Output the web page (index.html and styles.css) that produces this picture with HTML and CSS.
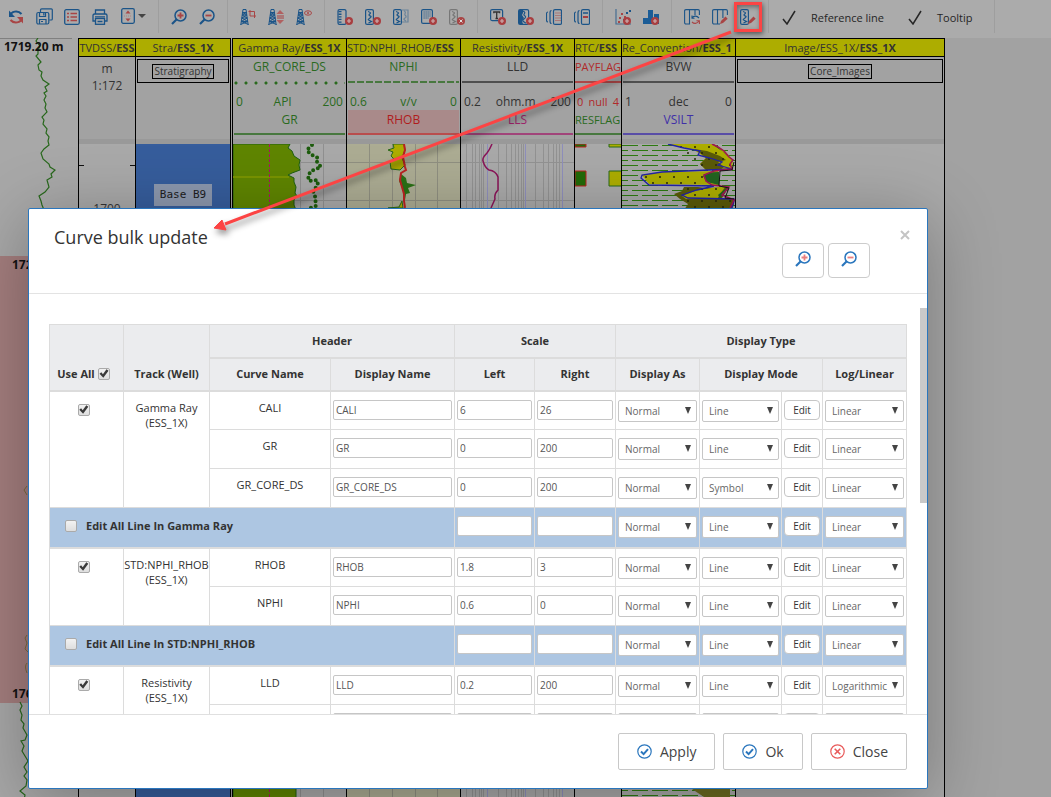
FILE: index.html
```html
<!DOCTYPE html>
<html lang="en">
<head>
<meta charset="utf-8">
<meta name="viewport" content="width=device-width, initial-scale=1">
<title>Curve bulk update</title>
<link rel="stylesheet" href="styles.css">
</head>
<body>
<svg class="defs" aria-hidden="true">
  <defs>
    <symbol id="plus-badge" viewBox="0 0 8 8"><circle cx="4" cy="4" r="4" fill="#a83e40"/><path d="M4 2v4M2 4h4" stroke="#ccb0b0" stroke-width="1.2"/></symbol>
    <symbol id="zoom-in" viewBox="0 0 16 16"><circle cx="9.500" cy="6.500" r="5.500" fill="none" stroke="currentColor" stroke-width="1.500"/><path d="M5.500 10.500L1 15" stroke="currentColor" stroke-width="2.200"/><path d="M9.500 3.500v6M6.500 6.500h6" stroke="var(--accent)" stroke-width="1.800"/></symbol>
    <symbol id="zoom-out" viewBox="0 0 16 16"><circle cx="9.500" cy="6.500" r="5.500" fill="none" stroke="currentColor" stroke-width="1.500"/><path d="M5.500 10.500L1 15" stroke="currentColor" stroke-width="2.200"/><path d="M6.500 6.500h6" stroke="var(--accent)" stroke-width="1.800"/></symbol>
    <symbol id="derrick" viewBox="0 0 9 16"><path d="M3 .5h3M3 .5L.8 16M6 .5L8.200 16M2.500 3.500h4M2.200 6h4.600M1.800 9h5.400M1.300 12.500h6.400M2.500 3.500l4.300 2.500L1.800 9l6 3.500L.5 15.500M6.500 3.500L2.200 6l5 3-6 3.500 7.300 3" stroke="currentColor" stroke-width="1" fill="none"/></symbol>
    <symbol id="curve-box" viewBox="0 0 9 16"><rect x=".6" y=".6" width="7.800" height="14.800" rx="1.500" fill="none" stroke="currentColor" stroke-width="1.200"/><path d="M3 2.500c5 1.500 1 2.500 1 3.500s4 1 1 3-2 1.500 1.500 3.500l-3 1.500" fill="none" stroke="currentColor" stroke-width="1.300"/></symbol>
    <symbol id="pencil" viewBox="0 0 8 8"><path d="M0 8l1-3 4.500-4.500 2.200 2.200L3 7z" fill="var(--accent)"/></symbol>
    <symbol id="tick" viewBox="0 0 15 15"><path d="M1 9l4 5L13 1" fill="none" stroke="currentColor" stroke-width="1.500"/></symbol>
    <symbol id="circle-check" viewBox="0 0 15 15"><circle cx="7.500" cy="7.500" r="6.700" fill="none" stroke="currentColor" stroke-width="1.200"/><path d="M4 7.500l2.600 2.600L11 5.200" fill="none" stroke="currentColor" stroke-width="2"/></symbol>
    <symbol id="circle-cross" viewBox="0 0 15 15"><circle cx="7.500" cy="7.500" r="6.700" fill="none" stroke="currentColor" stroke-width="1.200"/><path d="M4.700 4.700l5.600 5.600M10.300 4.700l-5.600 5.600" stroke="currentColor" stroke-width="1.600"/></symbol>
  </defs>
</svg>

<div class="app">
  <header class="toolbar">
    <div class="group first">
      <button class="tool" aria-label="Refresh"><svg width="16" height="16" viewBox="0 0 16 16" fill="none"><path d="M2 7C3 2 10 1 13.500 5" stroke="#1b5488" stroke-width="2"/><path d="M1 1.500V8h6z" fill="#1b5488"/><path d="M14 9c-1 5-8 6-11.500 2" stroke="#a84545" stroke-width="2"/><path d="M15 14.500V8H9z" fill="#a84545"/></svg></button>
      <button class="tool" aria-label="Save all"><svg width="17" height="17" viewBox="0 0 17 17" fill="none" stroke="#1b5488" stroke-width="1.200"><path d="M4.500 4V2q0-1.200 1.200-1.200h9.600q1 0 1 1V11q0 1-1 1h-2"/><rect x=".8" y="4.500" width="12" height="11.500" rx="1.500"/><path d="M3.500 5v3.500h6V5M3.500 16v-4.500h6.500V16M7.800 5v2.500M5 13.500h2"/></svg></button>
      <button class="tool" aria-label="List"><svg width="16" height="16" viewBox="0 0 16 16" fill="none"><rect x=".7" y=".7" width="14.600" height="14.600" rx="1.500" stroke="#1b5488" stroke-width="1.300"/><path d="M3 4.500h2M3 8h2M3 11.500h2M6.500 4.500H13M6.500 8H13M6.500 11.500H13" stroke="#a84545" stroke-width="1.400"/></svg></button>
      <button class="tool" aria-label="Print"><svg width="16" height="16" viewBox="0 0 16 16" fill="none" stroke="#1b5488" stroke-width="1.300"><path d="M3.500 5V1h9v4M3 12H1V6.500Q1 5 2.500 5h11Q15 5 15 6.500V12h-2"/><rect x="3.500" y="9.500" width="9" height="5.800"/><path d="M3 7.800h10M5.500 12.500h5"/></svg></button>
      <button class="tool drop" aria-label="Fit height"><svg width="14" height="16" viewBox="0 0 14 16"><rect x=".7" y=".7" width="12.600" height="14.600" rx="1.500" fill="none" stroke="#1b5488" stroke-width="1.300"/><path d="M7 2.500l2.500 3h-5zM7 13.500l2.500-3h-5z" fill="#a84545"/><path d="M3 8h8" stroke="#b08080" stroke-dasharray="1 1"/></svg><svg width="8" height="4" viewBox="0 0 8 4"><path d="M0 0h8L4 4z" fill="#444"/></svg></button>
    </div>
    <div class="group">
      <button class="tool" aria-label="Zoom in"><svg width="16" height="16"><use href="#zoom-in"/></svg></button>
      <button class="tool" aria-label="Zoom out"><svg width="16" height="16"><use href="#zoom-out"/></svg></button>
    </div>
    <div class="group">
      <button class="tool" aria-label="Crop well"><svg width="16" height="16" viewBox="0 0 16 16"><use href="#derrick" width="9" height="16"/><path d="M10 1v6h6M8.500 2.500h6V9" fill="none" stroke="#a84545"/></svg></button>
      <button class="tool" aria-label="Stretch well"><svg width="16" height="16" viewBox="0 0 16 16"><use href="#derrick" width="9" height="16"/><path d="M12 1l4 4H8.500zM12 15l4-4H8.500z" fill="#b06060"/><path d="M9 7h7M9 9h7" stroke="#a84545"/></svg></button>
      <button class="tool" aria-label="Show well"><svg width="16" height="16" viewBox="0 0 16 16"><use href="#derrick" width="9" height="16"/><ellipse cx="12" cy="4" rx="3.500" ry="2.200" fill="none" stroke="#a84545"/><circle cx="12" cy="4" r="1" fill="#a84545"/></svg></button>
    </div>
    <div class="group">
      <button class="tool" aria-label="Add depth track"><svg width="16" height="16" viewBox="0 0 16 16"><rect x="1" y=".6" width="8" height="14.800" rx="1.500" fill="none" stroke="currentColor" stroke-width="1.200"/><path d="M3 2v13" stroke="currentColor" stroke-width="3" stroke-dasharray="1.300 1.300"/><use href="#plus-badge" x="8" y="8" width="8" height="8"/></svg></button>
      <button class="tool" aria-label="Add curve track"><svg width="16" height="16" viewBox="0 0 16 16"><use href="#curve-box" width="9" height="16"/><use href="#plus-badge" x="8" y="8" width="8" height="8"/></svg></button>
      <button class="tool" aria-label="Duplicate track"><svg width="16" height="16" viewBox="0 0 16 16"><use href="#curve-box" width="9" height="16"/><g opacity=".45"><path d="M9 1h6v12H9M11 2c3 1 0 3 1 4s2 2 0 3-1 2 1 3" fill="none" stroke="currentColor" stroke-width="1.200"/></g></svg></button>
      <button class="tool" aria-label="Add table track"><svg width="16" height="16" viewBox="0 0 16 16"><rect x=".6" y=".6" width="10.800" height="13.800" rx="1.500" fill="none" stroke="currentColor" stroke-width="1.200"/><path d="M2.500 3h7M2.500 5h7M2.500 7h7M2.500 9h5" stroke="currentColor" stroke-width="1.200" stroke-dasharray="1.200 .8"/><use href="#plus-badge" x="8" y="8" width="8" height="8"/></svg></button>
      <button class="tool off" aria-label="Remove track"><svg width="16" height="16" viewBox="0 0 16 16"><use href="#curve-box" width="9" height="16"/><circle cx="12" cy="12" r="4" fill="#a84545"/><path d="M10.500 10.500l3 3M13.500 10.500l-3 3" stroke="#ddd"/></svg></button>
    </div>
    <div class="group">
      <button class="tool" aria-label="Add text"><svg width="16" height="16" viewBox="0 0 16 16"><rect x=".6" y=".6" width="12" height="11" rx="1.500" fill="none" stroke="currentColor" stroke-width="1.200"/><path d="M3.800 4.200V3h5.800v1.200M6.700 3v6.500M5.500 9.500H8" fill="none" stroke="#333" stroke-width="1.300"/><use href="#plus-badge" x="8" y="8" width="8" height="8"/></svg></button>
      <button class="tool" aria-label="Add filled curve"><svg width="16" height="16" viewBox="0 0 16 16"><path d="M1 1h4v3l-1 2 2 3-2 3 1 3H1z" fill="currentColor"/><rect x=".6" y=".6" width="10" height="14.800" rx="1.500" fill="none" stroke="currentColor" stroke-width="1.200"/><path d="M5 2c4 2 0 3 1 4s3 2 0 4 0 3 2 4" fill="none" stroke="currentColor" stroke-width="1.200"/><use href="#plus-badge" x="8" y="8" width="8" height="8"/></svg></button>
      <button class="tool" aria-label="Point track"><svg width="16" height="16" viewBox="0 0 16 16" fill="none"><path d="M2 3Q.5 3 .5 5v6q0 2 1.500 2M5.500 1.500Q4 1.500 4 4v8q0 2.500 1.500 2.500" stroke="currentColor" stroke-width="1.200"/><rect x="7.500" y=".6" width="8" height="14.800" rx="1.500" stroke="currentColor" stroke-width="1.200"/><path d="M9.500 4h5M9.500 6.500h5M9.500 9h5M9.500 11.500h5" stroke="#a84545" stroke-dasharray="1 1"/></svg></button>
      <button class="tool" aria-label="Line track"><svg width="16" height="16" viewBox="0 0 16 16" fill="none"><path d="M2 3Q.5 3 .5 5v6q0 2 1.500 2M5.500 1.500Q4 1.500 4 4v8q0 2.500 1.500 2.500" stroke="currentColor" stroke-width="1.200"/><rect x="7.500" y=".6" width="8" height="14.800" rx="1.500" stroke="currentColor" stroke-width="1.200"/><path d="M9 4h5" stroke="currentColor" stroke-width="1.500"/><path d="M9 8h5" stroke="#a83e40" stroke-width="2"/></svg></button>
    </div>
    <div class="group">
      <button class="tool" aria-label="Add cross plot"><svg width="16" height="16" viewBox="0 0 16 16"><path d="M1 0v15h15" fill="none" stroke="currentColor" stroke-width="1.200" opacity=".7"/><path d="M4 8h2v2H4zM6 4h2v2H6zM9 7h2v2H9zM3 12h2v2H3z" fill="#a84545"/><path d="M11 3h2v2h-2zM14 1h2v2h-2zM8 10h2v2H8z" fill="#1b5488"/><use href="#plus-badge" x="8" y="8" width="8" height="8"/></svg></button>
      <button class="tool" aria-label="Add histogram"><svg width="16" height="16" viewBox="0 0 16 16"><path d="M0 9h5v6H0zM5 1h5v14H5zM11 5h5v10h-5z" fill="#1b5c96"/><use href="#plus-badge" x="8" y="8" width="8" height="8"/></svg></button>
    </div>
    <div class="group">
      <button class="tool" aria-label="Reload tracks"><svg width="16" height="16" viewBox="0 0 16 16" fill="none" stroke="currentColor" stroke-width="1.100"><path d="M5.500 15H2q-1.400 0-1.400-1.400V2Q.6.600 2 .6h3.500zM5.500.6H11V6M10.900.6h3.200Q15.400.6 15.400 2v4M5.500.6V15"/><path d="M8 9c2-3 5-2 7 0M8 6.500V9.200h2.500"/><path d="M15 12c-2 3-5 3-7 1M15.400 15v-3.200h-3" stroke="#a84545"/></svg></button>
      <button class="tool" aria-label="Edit tracks"><svg width="16" height="16" viewBox="0 0 16 16" fill="none"><path d="M5.500 15H2q-1.400 0-1.400-1.400V2Q.6.600 2 .6h3.500V15zM5.500.6h5.400V9M10.900.6h3.200Q15.400.6 15.400 2v4M5.500 15H8" stroke="currentColor" stroke-width="1.100"/><use href="#pencil" x="8" y="7" width="8" height="8"/></svg></button>
      <button class="tool marked" aria-label="Curve bulk update"><svg width="16" height="16" viewBox="0 0 16 16"><use href="#curve-box" width="9" height="16"/><use href="#pencil" x="8" y="7" width="8" height="8"/></svg></button>
    </div>
    <div class="group toggles">
      <button class="toggle" aria-pressed="true"><svg width="15" height="15"><use href="#tick"/></svg>Reference line</button>
      <button class="toggle" aria-pressed="true"><svg width="15" height="15"><use href="#tick"/></svg>Tooltip</button>
    </div>
  </header>

  <main class="workspace">
    <aside class="overview">
      <svg class="fill" aria-hidden="true">
        <rect x="0" y="218" width="100" height="447" fill="#a47e7e"/>
        <path d="M0 .5h72" stroke="#808080"/>
        <path d="M38 0L36 3 40 8 38 12 38 16 36 18 41 24 38 27 39 32 42 34 41 38 43 42 49 46 45 49 47 53 44 55 46 58 44 62 46 66 45 70 47 74 42 79 44 82 43 86 47 91 46 95 49 99 48 103 49 107 44 111 41 115 43 121 49 126 50 129 55 132 51 136 52 139 47 142 49 149 45 154 39 158 41 163 42 167 44 172" fill="none" stroke="#28681c" stroke-width="1.200"/>
        <path d="M27 448l-3 4 3 5M27 597l-2 3 2 5-2 6 3 3M27 625q-3 3 0 10" fill="none" stroke="#7a6a40"/>
        <path d="M20 664L22 668 20 672 22 677 21 682 24 686 23 690 27 697 25 702 21 703 24 708 22 713 25 718 28 723 24 729 27 734 24 738 27 742 26 748 20 753 25 757 24 762" fill="none" stroke="#28681c" stroke-width="1.200"/>
      </svg>
      <span class="depth d1">1719.20 m</span><span class="depth d2">1720</span><span class="depth d3">1760</span>
    </aside>
    <section class="tracks">
      <div class="track w-depth">
        <h2>TVDSS/<b>ESS</b></h2>
        <div class="head"><p>m</p><p>1:172</p></div>
        <div class="plot"><svg class="fill" aria-hidden="true"><path d="M0 21.500h5M51 21.500h6" stroke="#111"/></svg><span class="mark">1700</span></div>
      </div>
      <div class="track w-stra">
        <h2>Stra/<b>ESS_1X</b></h2>
        <div class="head"><div class="box"><span>Stratigraphy</span></div></div>
        <div class="plot blue"><span class="zone">Base B9</span></div>
      </div>
      <div class="track w-curve">
        <h2>Gamma Ray/<b>ESS_1X</b></h2>
        <div class="head green"><p>GR_CORE_DS</p><i class="rule dotted"></i><div class="scale"><span>0</span><span>API</span><span>200</span></div><p class="second">GR</p><i class="rule"></i></div>
        <div class="plot"><svg class="fill" aria-hidden="true">
          <path d="M67.500 0v660M90.500 0v660M0 18.500h114M0 56.500h114" stroke="#909090"/>
          <path d="M0 0H57L55 4 59 7 61 12 67 16 66 21 67 26 59 29 55 31 61 34 61 38 63 43 62 49 64 52 61 56 61 61 63 66V660H0z" fill="#5f8500" stroke="#1f6010"/>
          <path d="M0 33h56" stroke="#799400" stroke-width="2"/>
          <path d="M36.500 0v660" stroke="#aa1464" stroke-dasharray="3 2"/>
          <path d="M79 1l-5 5 3 4 8 4-1 4 4 5-10 4-3 5 1 5 8-1 1 5-5 6 2 5 1 10-6 2" fill="none" stroke="#1d5c0d" stroke-width="4" stroke-linecap="round" stroke-dasharray="0 5"/>
        </svg></div>
      </div>
      <div class="track w-curve">
        <h2 class="left">STD:NPHI_RHOB/<b>ESS</b></h2>
        <div class="head green"><p>NPHI</p><i class="rule dashed"></i><div class="scale"><span>0.6</span><span>v/v</span><span>0</span></div><p class="second hot">RHOB</p><i class="rule red"></i></div>
        <div class="plot sand"><svg class="fill" aria-hidden="true">
          <path d="M22.500 0v660M45.500 0v660M68.500 0v660M90.500 0v660M0 18.500h114M0 56.500h114" stroke="#8f8f80"/>
          <path d="M46 0L47 4 41 6 46 8 44 12 47 15 43 18 44 25 53 26 58 21 55 14 58 6 57 0zM55 57L52 63 41 64h15z" fill="#adad00" stroke="#28681c"/>
          <path d="M54 30L59 34 60 39 69 41 61 44 63 49 59 50 58 56 56 46 52 37z" fill="#2a7016"/>
          <path d="M57 0L58 6 56 13 57 18 58 23 59 26 54 29 53 36 55 43 57 50 57 57 58 64" fill="none" stroke="#b22" stroke-width="2"/>
        </svg></div>
      </div>
      <div class="track w-curve">
        <h2>Resistivity/<b>ESS_1X</b></h2>
        <div class="head"><p>LLD</p><i class="rule"></i><div class="scale"><span>0.2</span><span>ohm.m</span><span>200</span></div><p class="second magenta">LLS</p><i class="rule magenta"></i></div>
        <div class="plot"><svg class="fill" aria-hidden="true">
          <path d="M5.500 0v660M11.500 0v660M14.500 0v660M18.500 0v660M20.500 0v660M22.500 0v660M37.500 0v660M45.500 0v660M50.500 0v660M54.500 0v660M57.500 0v660M60.500 0v660M62.500 0v660M74.500 0v660M82.500 0v660M87.500 0v660M92.500 0v660M95.500 0v660M98.500 0v660M0 18.500h114M0 56.500h114" stroke="#929292"/>
          <path d="M26.500 0v660M64.500 0v660M101.500 0v660" stroke="#8e8ebb"/>
          <path d="M31 0Q29 5 26 9 21 14 22 17 24 24 28 26 35 27 37 33V46Q33 50 34 55L30 64" fill="none" stroke="#8a1458" stroke-width="1.500"/>
        </svg></div>
      </div>
      <div class="track w-flag">
        <h2 class="left">RTC/<b>ESS</b></h2>
        <div class="head red"><p class="left">PAYFLAG</p><i class="rule"></i><div class="scale"><span>0</span><span>null</span><span>4</span></div><p class="second greenish left">RESFLAG</p><i class="rule greenish"></i></div>
        <div class="plot"><svg class="fill" aria-hidden="true"><path d="M0 0h11v3H0zM0 27h11v15H0z" fill="#226a08" stroke="#b22"/><path d="M34 0h13v3H34zM34 27h13v15H34z" fill="#adad00" stroke="#28681c"/></svg></div>
      </div>
      <div class="track w-curve">
        <h2 class="left">Re_Convention/<b>ESS_1</b></h2>
        <div class="head"><p>BVW</p><i class="rule"></i><div class="scale"><span>1</span><span>dec</span><span>0</span></div><p class="second violet">VSILT</p><i class="rule violet"></i></div>
        <div class="plot"><svg class="fill" aria-hidden="true">
          <defs>
            <pattern id="dots" width="14" height="12" patternUnits="userSpaceOnUse"><circle cx="3" cy="3" r="1" fill="#26260a"/><circle cx="10" cy="9" r="1" fill="#26260a"/></pattern>
            <pattern id="dashes" width="20" height="10" patternUnits="userSpaceOnUse"><path d="M0 1.500h16M0 6.500h6M10 6.500h10" stroke="#2d7a10"/></pattern>
          </defs>
          <rect width="113" height="660" fill="url(#dashes)"/>
          <path d="M46 0H92L103 7 111 16 110 25 84 26 78 20 84 14 72 6z" fill="#adad00"/>
          <path d="M72 5L85 7 98 12 104 16 96 18 102 23 98 26H84L78 20 84 14 78 9z" fill="#5a5a08"/>
          <path d="M90 0L96 3 101 8 107 13 110 16 104 10z" fill="#236420"/>
          <path d="M20 31L40 28 96 27 97 41 27 40z" fill="#adad00"/>
          <path d="M97 28Q84 28 81 32L85 38 97 41z" fill="#236420"/>
          <path d="M62 43H76L84 44 107 43 100 54 113 55 110 66H62L66 60 58 55 52 50 60 47z" fill="#5a5a08"/>
          <path d="M60 52L75 46 104 42 98 50 96 54 64 55z" fill="#adad00"/>
          <path d="M107 42L102 50 98 54 96 51 102 46z" fill="#236420"/>
          <path d="M46 0H92L111 16 110 25H80zM20 31L40 28H82V41H27zM60 44H104L97 54 110 56 108 66H62z" fill="url(#dots)"/>
          <path d="M46 0L62 4 78 7 76 11 88 14 100 18 96 21 110 25 40 28 20 31 19 34 27 41 92 42 75 46 60 51 66 54 112 55Q112 62 108 66" fill="none" stroke="#2222a8" stroke-width="1.300"/>
          <path d="M90 0L96 3 102 7 107 13 111 16 108 20 110 25 92 27 82 31 84 37 90 41 107 43 100 51 112 56 108 64" fill="none" stroke="#a01458" stroke-width="1.500"/>
          <path d="M112 18L110 26 98 27 97 42 107 44 103 54 112 55" fill="none" stroke="#151515"/>
          <path d="M70 645q20-6 38 0v10H85z" fill="#6c6c20"/>
        </svg></div>
      </div>
      <div class="track w-image">
        <h2>Image/ESS_1X/<b>ESS_1X</b></h2>
        <div class="head"><div class="box"><span>Core_Images</span></div></div>
        <div class="plot"></div>
      </div>
    </section>
  </main>

  <div class="dialog" role="dialog" aria-labelledby="dialog-title">
    <header class="dialog-head">
      <h1 id="dialog-title">Curve bulk update</h1>
      <div class="zoomers">
        <button class="zoomer" aria-label="Zoom in table"><svg width="16" height="16"><use href="#zoom-in"/></svg></button>
        <button class="zoomer" aria-label="Zoom out table"><svg width="16" height="16"><use href="#zoom-out"/></svg></button>
      </div>
      <button class="dismiss" aria-label="Dismiss"><svg width="10" height="10" viewBox="0 0 10 10"><path d="M1 1l8 8M9 1L1 9" stroke="#c4c4c4" stroke-width="2"/></svg></button>
    </header>
    <div class="dialog-body">
      <table class="curves">
        <colgroup><col class="c-use"><col class="c-track"><col class="c-name"><col class="c-display"><col class="c-left"><col class="c-right"><col class="c-as"><col class="c-mode"><col class="c-edit"><col class="c-log"></colgroup>
        <thead>
          <tr><th rowspan="2" class="low"><label class="use">Use All <input type="checkbox" checked></label></th><th rowspan="2" class="low">Track (Well)</th><th colspan="2">Header</th><th colspan="2">Scale</th><th colspan="4">Display Type</th></tr>
          <tr><th>Curve Name</th><th>Display Name</th><th>Left</th><th>Right</th><th>Display As</th><th colspan="2">Display Mode</th><th>Log/Linear</th></tr>
        </thead>
        <tbody>
          <tr><td rowspan="3" class="pick"><input type="checkbox" checked aria-label="Use Gamma Ray"></td><td rowspan="3" class="well">Gamma Ray<br>(ESS_1X)</td><td class="name">CALI</td><td><input type="text" value="CALI" aria-label="Display name"></td><td><input type="text" value="6" aria-label="Left"></td><td><input type="text" value="26" aria-label="Right"></td><td><span class="sel"><select aria-label="Display as"><option>Normal</option></select></span></td><td><span class="sel"><select aria-label="Display mode"><option>Line</option></select></span></td><td><button class="edit">Edit</button></td><td><span class="sel"><select aria-label="Log or linear"><option>Linear</option></select></span></td></tr>
          <tr><td class="name">GR</td><td><input type="text" value="GR" aria-label="Display name"></td><td><input type="text" value="0" aria-label="Left"></td><td><input type="text" value="200" aria-label="Right"></td><td><span class="sel"><select aria-label="Display as"><option>Normal</option></select></span></td><td><span class="sel"><select aria-label="Display mode"><option>Line</option></select></span></td><td><button class="edit">Edit</button></td><td><span class="sel"><select aria-label="Log or linear"><option>Linear</option></select></span></td></tr>
          <tr><td class="name">GR_CORE_DS</td><td><input type="text" value="GR_CORE_DS" aria-label="Display name"></td><td><input type="text" value="0" aria-label="Left"></td><td><input type="text" value="200" aria-label="Right"></td><td><span class="sel"><select aria-label="Display as"><option>Normal</option></select></span></td><td><span class="sel"><select aria-label="Display mode"><option>Symbol</option></select></span></td><td><button class="edit">Edit</button></td><td><span class="sel"><select aria-label="Log or linear"><option>Linear</option></select></span></td></tr>
          <tr class="all"><th colspan="4" scope="row"><label><input type="checkbox">Edit All Line In Gamma Ray</label></th><td><input type="text" aria-label="Left"></td><td><input type="text" aria-label="Right"></td><td><span class="sel"><select aria-label="Display as"><option>Normal</option></select></span></td><td><span class="sel"><select aria-label="Display mode"><option>Line</option></select></span></td><td><button class="edit">Edit</button></td><td><span class="sel"><select aria-label="Log or linear"><option>Linear</option></select></span></td></tr>
        </tbody>
        <tbody>
          <tr><td rowspan="2" class="pick"><input type="checkbox" checked aria-label="Use STD:NPHI_RHOB"></td><td rowspan="2" class="well">STD:NPHI_RHOB<br>(ESS_1X)</td><td class="name">RHOB</td><td><input type="text" value="RHOB" aria-label="Display name"></td><td><input type="text" value="1.8" aria-label="Left"></td><td><input type="text" value="3" aria-label="Right"></td><td><span class="sel"><select aria-label="Display as"><option>Normal</option></select></span></td><td><span class="sel"><select aria-label="Display mode"><option>Line</option></select></span></td><td><button class="edit">Edit</button></td><td><span class="sel"><select aria-label="Log or linear"><option>Linear</option></select></span></td></tr>
          <tr><td class="name">NPHI</td><td><input type="text" value="NPHI" aria-label="Display name"></td><td><input type="text" value="0.6" aria-label="Left"></td><td><input type="text" value="0" aria-label="Right"></td><td><span class="sel"><select aria-label="Display as"><option>Normal</option></select></span></td><td><span class="sel"><select aria-label="Display mode"><option>Line</option></select></span></td><td><button class="edit">Edit</button></td><td><span class="sel"><select aria-label="Log or linear"><option>Linear</option></select></span></td></tr>
          <tr class="all"><th colspan="4" scope="row"><label><input type="checkbox">Edit All Line In STD:NPHI_RHOB</label></th><td><input type="text" aria-label="Left"></td><td><input type="text" aria-label="Right"></td><td><span class="sel"><select aria-label="Display as"><option>Normal</option></select></span></td><td><span class="sel"><select aria-label="Display mode"><option>Line</option></select></span></td><td><button class="edit">Edit</button></td><td><span class="sel"><select aria-label="Log or linear"><option>Linear</option></select></span></td></tr>
        </tbody>
        <tbody>
          <tr><td rowspan="2" class="pick"><input type="checkbox" checked aria-label="Use Resistivity"></td><td rowspan="2" class="well">Resistivity<br>(ESS_1X)</td><td class="name">LLD</td><td><input type="text" value="LLD" aria-label="Display name"></td><td><input type="text" value="0.2" aria-label="Left"></td><td><input type="text" value="200" aria-label="Right"></td><td><span class="sel"><select aria-label="Display as"><option>Normal</option></select></span></td><td><span class="sel"><select aria-label="Display mode"><option>Line</option></select></span></td><td><button class="edit">Edit</button></td><td><span class="sel"><select aria-label="Log or linear"><option>Logarithmic</option></select></span></td></tr>
          <tr><td class="name"></td><td><input type="text" aria-label="Display name"></td><td><input type="text" aria-label="Left"></td><td><input type="text" aria-label="Right"></td><td><span class="sel"><select aria-label="Display as"><option></option></select></span></td><td><span class="sel"><select aria-label="Display mode"><option></option></select></span></td><td><button class="edit" aria-label="Edit line"></button></td><td><span class="sel"><select aria-label="Log or linear"><option></option></select></span></td></tr>
        </tbody>
      </table>
      <span class="thumb"></span>
    </div>
    <footer class="dialog-foot">
      <button class="action"><svg width="15" height="15"><use href="#circle-check"/></svg>Apply</button>
      <button class="action"><svg width="15" height="15"><use href="#circle-check"/></svg>Ok</button>
      <button class="action close"><svg width="15" height="15"><use href="#circle-cross"/></svg>Close</button>
    </footer>
  </div>

  <svg class="callout" width="540" height="220" aria-hidden="true"><path d="M521 12L15 204" stroke="#fc4444" stroke-width="3"/><path d="M4 208l8-8 4 10z" fill="#fc4444" stroke="#fc4444"/></svg>
</div>
</body>
</html>
```

FILE: styles.css
```css
* { box-sizing: border-box; }

body {
  margin: 0;
  font-family: "Open Sans", "Noto Sans", sans-serif;
  font-size: 11px;
  color: #333;
  --accent: #a84545;
}

button, input, select { font: inherit; color: inherit; margin: 0; }
button { cursor: pointer; }
h1, h2, p { margin: 0; font-weight: 400; }
.defs { position: absolute; width: 0; height: 0; }

.app {
  position: relative;
  display: flex;
  flex-direction: column;
  height: 100vh;
  min-height: 500px;
  overflow: hidden;
  background: #a2a2a2;
}

/* Toolbar */
.toolbar {
  display: flex;
  flex: none;
  height: 38px;
  background: #ababab;
  color: #1b5488;
}
.group {
  display: flex;
  height: 33px;
  padding: 0 6px;
  border-right: 1px solid #9e9e9e;
}
.group.first { padding-left: 2px; }
.tool {
  display: flex;
  align-items: center;
  justify-content: center;
  width: 28px;
  height: 33px;
  padding: 0;
  border: 0;
  background: none;
}
.tool.drop { width: 38px; gap: 3px; padding-bottom: 2px; }
.tool.off { color: #777; }
.tool.marked {
  height: 30px;
  margin-top: 2px;
  border: 3px solid #fc4444;
  box-shadow: 1px 2px 5px rgba(0, 0, 0, .5), inset 1px 2px 5px rgba(0, 0, 0, .4);
}
.group.toggles { gap: 24px; padding: 0 21px 0 13px; }
.toggle {
  display: flex;
  align-items: center;
  gap: 14px;
  padding: 2px 0 0;
  border: 0;
  background: none;
  color: #262626;
  font-size: 11px;
}

/* Well tracks behind the dialog */
.workspace { display: flex; flex: 1; min-height: 0; }
.overview {
  position: relative;
  flex: none;
  width: 78px;
  background: #a8a8a8;
  overflow: hidden;
}
.fill { display: block; position: absolute; inset: 0; width: 100%; height: 100%; }
.depth {
  position: absolute;
  left: 12px;
  font-size: 12px;
  line-height: 18px;
  font-weight: 700;
  color: #111;
}
.d1 { top: 0; left: 4px; }
.d2 { top: 218px; }
.d3 { top: 647px; }
.tracks { display: flex; border-right: 1px solid #000; }
.track {
  display: flex;
  flex-direction: column;
  min-width: 0;
  border-left: 1px solid #000;
  overflow: hidden;
}
.w-depth { width: 57px; }
.w-stra { width: 96px; border-right: 1px solid #000; margin-right: 1px; }
.w-curve { width: 114px; }
.w-flag { width: 47px; }
.w-image { width: 209px; }
.track h2 {
  flex: none;
  height: 19px;
  border-top: 1px solid #000;
  border-bottom: 1px solid #000;
  background: #adad00;
  font-size: 11px;
  line-height: 17px;
  text-align: center;
  white-space: nowrap;
  overflow: hidden;
  color: #333;
}
.track h2.left, .head p.left { text-align: left; }
.head {
  flex: none;
  height: 82px;
  padding: 2px 1px 0;
  background: #a2a2a2;
  font-size: 12px;
  line-height: 16px;
  text-align: center;
}
.w-flag .head { font-size: 11px; padding-left: 0; padding-right: 0; }
.head.green { color: #2a6a1e; }
.head.red { color: #b02a2a; }
.rule { display: block; height: 2px; background: currentColor; opacity: .75; }
.rule.dotted {
  height: 4px;
  margin-bottom: -2px;
  background: radial-gradient(circle at 2px 2px, currentColor 1px, transparent 2px) 0 0 / 10px 4px;
  opacity: 1;
}
.rule.dashed { background: repeating-linear-gradient(90deg, currentColor 0 7px, transparent 7px 9px); }
.rule.red { color: #c03030; }
.magenta { color: #a0246c; }
.violet { color: #4030a8; }
.greenish { color: #2a6a1e; }
.head p + .rule { margin-top: 6px; }
.scale {
  display: flex;
  justify-content: space-between;
  margin-top: 11px;
  padding: 0 2px;
}
.head p.second { padding: 2px 0 5px; }
.head p.second + .rule { margin-top: 0; }
.head p.hot { background: #a98a8a; color: #b01c1c; }
.w-depth .head p { padding-top: 2px; }
.w-depth .head { line-height: 15px; }
.box {
  display: flex;
  align-items: center;
  justify-content: center;
  height: 24px;
  border: 1px solid #000;
}
.box span {
  padding: 0 1px;
  border: 1px solid #000;
  font-size: 10px;
  line-height: 13px;
}
.plot {
  position: relative;
  flex: 1;
  border-top: 5px solid #999;
  background: #a9a9a9;
  overflow: hidden;
}
.plot.blue { background: #365d9c; text-align: center; }
.plot.sand { background: #acac93; }
.mark { display: block; margin-top: 56px; font-size: 12px; text-align: center; }
.zone {
  display: inline-block;
  margin-top: 40px;
  padding: 0 6px;
  background: #8c98ae;
  font: 11px/22px "DejaVu Sans Mono", monospace;
  color: #1c1c1c;
}

/* Dialog */
.dialog {
  position: absolute;
  inset: 208px 123px 8px 28px;
  display: flex;
  flex-direction: column;
  background: #fff;
  border: 1px solid #2a76bd;
  border-radius: 2px;
  box-shadow: 0 12px 70px rgba(0, 0, 0, .3);
  --accent: #e88080;
}
.dialog-head {
  display: flex;
  flex: none;
  height: 85px;
  padding: 0 17px 0 25px;
  border-bottom: 1px solid #e3e3e3;
}
.dialog-head h1 {
  flex: 1;
  padding-top: 15px;
  font-size: 18px;
  line-height: 26px;
  color: #333;
}
.zoomers { display: flex; gap: 4px; margin: 34px 30px 0 0; }
.zoomer {
  width: 42px;
  height: 35px;
  padding: 0 0 5px;
  border: 1px solid #ccc;
  border-radius: 4px;
  background: #fff;
  color: #2a76bd;
}
.zoomer svg { vertical-align: middle; }
.dismiss {
  align-self: flex-start;
  display: flex;
  margin-top: 21px;
  padding: 0;
  border: 0;
  background: none;
}
.dialog-body {
  position: relative;
  flex: 1;
  min-height: 0;
  padding: 30px 20px 0;
  overflow: hidden;
}
.thumb {
  position: absolute;
  top: 14px;
  right: 0;
  width: 7px;
  height: 195px;
  background: #c9c9c9;
}
.curves {
  width: 100%;
  table-layout: fixed;
  border-collapse: collapse;
}
.c-use { width: 74px; }
.c-track { width: 86px; }
.c-name { width: 121px; }
.c-display { width: 124px; }
.c-left { width: 80px; }
.c-right { width: 81px; }
.c-as { width: 84px; }
.c-mode { width: 82px; }
.c-edit { width: 41px; }
.c-log { width: 84px; }
.curves th, .curves td { border: 1px solid #dcdcdc; padding: 0; }
.curves thead th {
  height: 33px;
  background: #ebecee;
  border-bottom-width: 2px;
  font-weight: 700;
  line-height: 16px;
}
.curves thead th.low { vertical-align: bottom; padding-bottom: 8px; }
.use { display: inline-flex; align-items: center; gap: 3px; padding-right: 6px; }
.curves tbody td { height: 39px; padding: 8px 2px 0; vertical-align: top; }
.curves tbody td.pick { padding-top: 12px; padding-right: 8px; text-align: center; }
.curves tbody td.name, .curves tbody td.well {
  padding-left: 0;
  padding-right: 0;
  text-align: center;
  line-height: 15px;
  white-space: nowrap;
}
.curves tr.all th, .curves tr.all td {
  height: 40px;
  background: #adc6e2;
  border-bottom-width: 2px;
}
.curves tr.all th { padding: 0 0 3px 15px; text-align: left; }
.curves tr.all label { display: flex; align-items: center; gap: 9px; }

input[type="text"] {
  display: block;
  width: 100%;
  height: 20px;
  padding: 0 2px;
  border: 1px solid #c6c6c6;
  border-radius: 2px;
  background: #fff;
  font-size: 10px;
  color: #555;
}
.sel { position: relative; display: block; }
.sel::after {
  content: "";
  position: absolute;
  top: 7px;
  right: 6px;
  border: 3px solid transparent;
  border-top: 7px solid #444;
  border-bottom: 0;
  pointer-events: none;
}
.sel select {
  display: block;
  width: 100%;
  height: 22px;
  padding: 0 14px 0 6px;
  border: 1px solid #c6c6c6;
  border-radius: 2px;
  background: #fff;
  appearance: none;
  font-size: 10px;
  color: #666;
}
.edit {
  display: block;
  width: 100%;
  height: 20px;
  padding: 0;
  border: 1px solid #c6c6c6;
  border-radius: 4px;
  background: #fff;
  font-size: 10px;
  color: #333;
}
input[type="checkbox"] {
  display: inline-block;
  width: 12px;
  height: 12px;
  border: 1px solid #aaa;
  border-radius: 2px;
  background: linear-gradient(#f2f2f2, #dedede);
  appearance: none;
  vertical-align: top;
}
input[type="checkbox"]:checked::before {
  content: "";
  display: block;
  height: 10px;
  background: #3a3a3a;
  clip-path: polygon(8% 52%, 26% 38%, 42% 58%, 78% 8%, 98% 22%, 46% 92%);
}

.dialog-foot {
  display: flex;
  flex: none;
  justify-content: flex-end;
  align-items: flex-start;
  gap: 8px;
  height: 74px;
  padding: 18px 20px 0;
  border-top: 1px solid #e0e0e0;
}
.action {
  display: flex;
  align-items: center;
  gap: 8px;
  height: 37px;
  padding: 0 18px;
  border: 1px solid #c8c8c8;
  border-radius: 2px;
  background: #fff;
  font-size: 14px;
  color: #444;
}
.action svg { color: #2a76bd; }
.action.close svg { color: #e85a5a; }

/* Arrow that ties the highlighted tool to the dialog */
.callout {
  position: absolute;
  top: 20px;
  left: 210px;
  pointer-events: none;
  filter: drop-shadow(2px 4px 3px rgba(0, 0, 0, .45));
}
```
